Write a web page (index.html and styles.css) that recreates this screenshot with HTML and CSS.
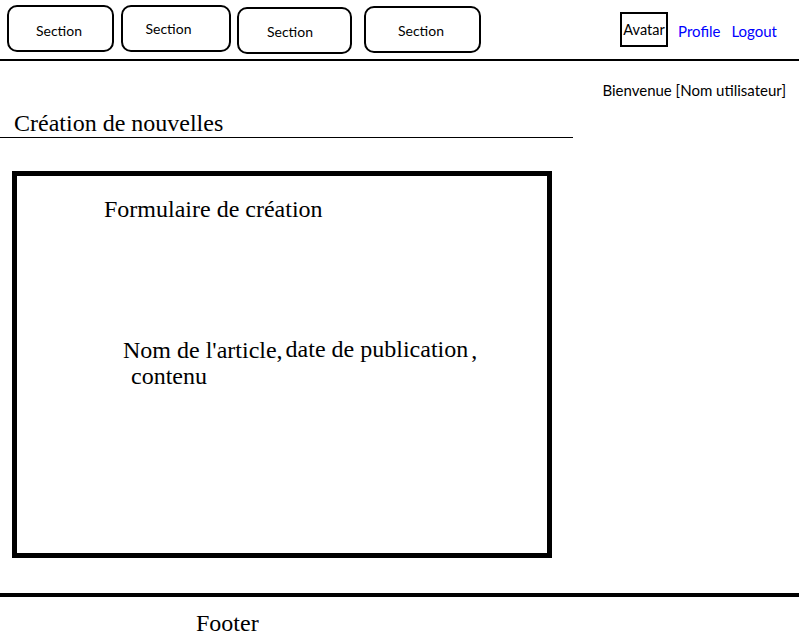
FILE: index.html
```html
<!DOCTYPE html>
<html lang="fr">
<head>
<meta charset="utf-8">
<title>Création de nouvelles</title>
<link rel="stylesheet" href="styles.css">
</head>
<body>
<header class="topbar">
  <nav class="sections">
    <a class="section-btn btn-1" href="#">Section</a>
    <a class="section-btn btn-2" href="#">Section</a>
    <a class="section-btn btn-3" href="#">Section</a>
    <a class="section-btn btn-4" href="#">Section</a>
  </nav>
  <div class="user-area">
    <div class="avatar">Avatar</div>
    <a class="user-link" href="#">Profile</a>
    <a class="user-link" href="#">Logout</a>
  </div>
</header>
<div class="welcome">Bienvenue [Nom utilisateur]</div>
<main class="content">
  <h1 class="page-title">Création de nouvelles</h1>
  <section class="form-box">
    <h2 class="form-title">Formulaire de création</h2>
    <div class="form-fields">
      <div class="fields-line"><span>Nom de l'article,</span><span class="field-date">date de publication</span><span class="field-comma">,</span></div>
      <div class="fields-line fields-second">contenu</div>
    </div>
  </section>
</main>
<footer class="footer">
  <div class="footer-text">Footer</div>
</footer>
</body>
</html>
```
FILE: styles.css
```css
* { box-sizing: border-box; }
html, body { margin: 0; padding: 0; background: #fff; color: #000; }
body { width: 799px; height: 641px; overflow: hidden; }

.topbar {
  height: 61px;
  border-bottom: 2px solid #000;
  display: flex;
  align-items: flex-start;
  justify-content: space-between;
  font-family: Lato, "Liberation Sans", sans-serif;
  font-size: 14px;
}
.sections { display: flex; align-items: flex-start; padding-left: 7px; }
.section-btn {
  display: flex;
  align-items: center;
  justify-content: center;
  height: 47px;
  border: 2px solid #000;
  border-radius: 10px;
  color: #000;
  text-decoration: none;
}
.btn-1 { width: 107px; margin-top: 5px; padding-top: 3px; padding-right: 3px; }
.btn-2 { width: 110px; margin-top: 5px; margin-left: 7px; padding-right: 15px; padding-bottom: 1px; }
.btn-3 { width: 115px; margin-top: 7px; margin-left: 6px; padding-right: 9px; padding-top: 1px; }
.btn-4 { width: 117px; margin-top: 6px; margin-left: 12px; padding-right: 3px; padding-top: 1px; }

.user-area { display: flex; align-items: center; margin-top: 12px; padding-right: 22px; font-size: 15px; }
.avatar {
  flex: none;
  width: 48px;
  height: 35px;
  border: 2px solid #000;
  display: flex;
  align-items: center;
  justify-content: center;
  font-size: 14.5px;
}
.user-link { color: #0000ff; text-decoration: none; margin-left: 10px; padding-top: 2px; }
.user-link + .user-link { margin-left: 11px; }

.welcome {
  font-family: Lato, "Liberation Sans", sans-serif;
  font-size: 15px;
  line-height: 17px;
  text-align: right;
  padding-right: 13px;
  margin-top: 21px;
}

.content { font-family: "Liberation Serif", "Times New Roman", serif; }
.page-title {
  width: 573px;
  margin: 10px 0 0;
  padding-left: 14px;
  font-family: "Liberation Serif", "Times New Roman", serif;
  font-size: 24px;
  font-weight: normal;
  line-height: 28px;
  border-bottom: 1px solid #000;
}
.form-box {
  width: 540px;
  height: 387px;
  margin: 33px 0 0 12px;
  border: 5px solid #000;
  padding-top: 19px;
}
.form-title {
  margin: 0;
  padding-left: 87px;
  font-family: "Liberation Serif", "Times New Roman", serif;
  font-size: 24px;
  font-weight: normal;
  line-height: 28px;
}
.form-fields { margin-top: 114px; padding-left: 106px; font-size: 24px; line-height: 26px; }
.field-date { margin-left: 3px; position: relative; top: -1px; }
.field-comma { margin-left: 3px; }
.fields-second { padding-left: 8px; }

.footer {
  margin-top: 35px;
  border-top: 4px solid #000;
  font-family: "Liberation Serif", "Times New Roman", serif;
  font-size: 24px;
  line-height: 28px;
  padding-top: 12px;
  padding-left: 196px;
}
```
